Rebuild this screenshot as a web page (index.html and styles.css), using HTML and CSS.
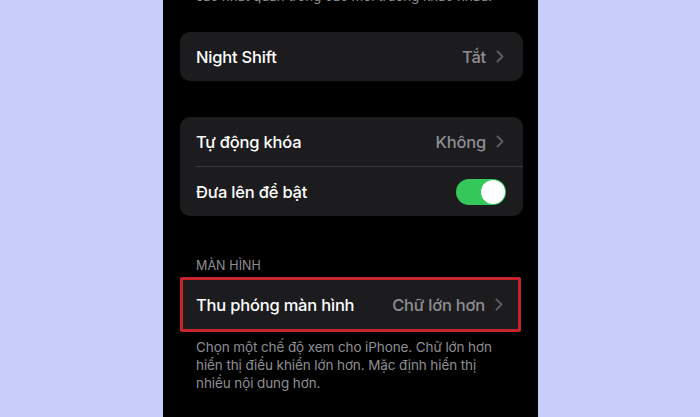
FILE: index.html
```html
<!DOCTYPE html>
<html lang="vi">
<head>
<meta charset="utf-8">
<link rel="stylesheet" href="styles.css">
</head>
<body>
<div class="page">
  <div class="screen">
    <p class="note note-top">sắc nhất quán trong các môi trường khác nhau.</p>

    <div class="card card-first">
      <div class="row">
        <span class="label">Night Shift</span>
        <span class="value">Tắt<svg class="chev" width="8" height="13" viewBox="0 0 8 13"><path d="M1.5 1.5 L6.5 6.5 L1.5 11.5" fill="none" stroke="#5c5c61" stroke-width="2" stroke-linecap="round" stroke-linejoin="round"/></svg></span>
      </div>
    </div>

    <div class="card card-second">
      <div class="row">
        <span class="label">Tự động khóa</span>
        <span class="value">Không<svg class="chev" width="8" height="13" viewBox="0 0 8 13"><path d="M1.5 1.5 L6.5 6.5 L1.5 11.5" fill="none" stroke="#5c5c61" stroke-width="2" stroke-linecap="round" stroke-linejoin="round"/></svg></span>
      </div>
      <div class="sep"></div>
      <div class="row">
        <span class="label">Đưa lên để bật</span>
        <span class="toggle"><span class="knob"></span></span>
      </div>
    </div>

    <div class="section-title">MÀN HÌNH</div>
    <div class="card card-hl">
      <div class="row row-hl">
        <span class="label">Thu phóng màn hình</span>
        <span class="value">Chữ lớn hơn<svg class="chev" width="8" height="13" viewBox="0 0 8 13"><path d="M1.5 1.5 L6.5 6.5 L1.5 11.5" fill="none" stroke="#5c5c61" stroke-width="2" stroke-linecap="round" stroke-linejoin="round"/></svg></span>
      </div>
    </div>
    <p class="note note-desc">Chọn một chế độ xem cho iPhone. Chữ lớn hơn hiển thị điều khiển lớn hơn. Mặc định hiển thị nhiều nội dung hơn.</p>
  </div>
</div>
</body>
</html>
```

FILE: styles.css
```css
* { box-sizing: border-box; }
html, body { margin: 0; padding: 0; }
body {
  width: 700px;
  height: 417px;
  overflow: hidden;
  background: #c8cdf9;
  font-family: Inter, "Noto Sans", "Liberation Sans", sans-serif;
}
.page {
  display: flex;
  justify-content: center;
  height: 417px;
}
.screen {
  width: 375px;
  margin-left: 1px;
  height: 417px;
  background: #000;
  padding: 0 15px 0 17px;
  overflow: hidden;
}
.note {
  margin: 0;
  color: #8e8e93;
  font-size: 13.5px;
  line-height: 18px;
  padding: 0 16px;
  letter-spacing: -0.1px;
}
.note-top { margin-top: -13px; }
.card {
  background: #1c1c1e;
  border-radius: 10px;
}
.card-first { margin-top: 27px; }
.card-second { margin-top: 36px; }
.row {
  display: flex;
  align-items: center;
  justify-content: space-between;
  height: 49px;
  padding: 0 17px 0 16px;
}
.label {
  color: #fff;
  font-size: 16.5px;
  font-weight: 500;
  letter-spacing: -0.2px;
}
.value {
  display: flex;
  align-items: center;
  gap: 10px;
  color: #8e8e93;
  font-size: 16.5px;
  font-weight: 500;
  letter-spacing: -0.2px;
}
.chev { display: block; margin-right: 2px; }
.sep {
  height: 1px;
  background: #38383a;
  margin-left: 16px;
}
.toggle {
  width: 50px;
  height: 26px;
  border-radius: 13px;
  background: #34c759;
  display: flex;
  align-items: center;
  justify-content: flex-end;
  padding: 1px;
}
.knob {
  width: 24px;
  height: 24px;
  border-radius: 50%;
  background: #fff;
}
.section-title {
  margin-top: 42px;
  padding: 0 16px;
  color: #8e8e93;
  font-size: 12.5px;
  line-height: 16px;
  letter-spacing: 0.1px;
}
.card-hl {
  margin-top: 3px;
  margin-right: 2px;
  border: 3px solid #c8232c;
  border-radius: 2px;
}
.row-hl {
  height: 49px;
  padding: 0 13px 0 13px;
}
.note-desc { margin-top: 6px; }
```
